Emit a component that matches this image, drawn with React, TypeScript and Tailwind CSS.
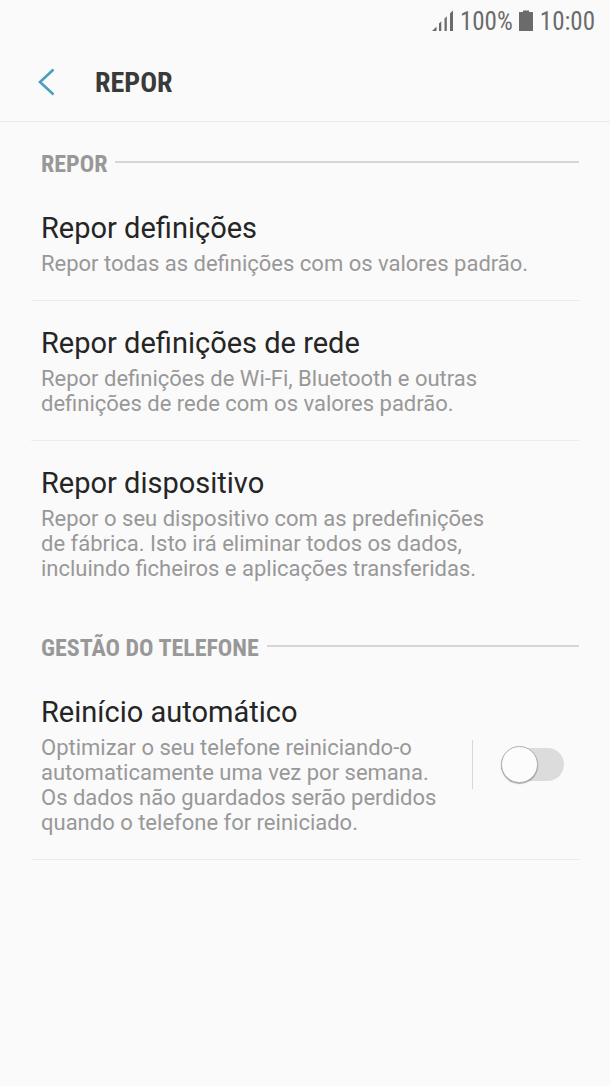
import type { ReactNode } from "react";

function StatusBar() {
  return (
    <div className="flex h-[42px] items-center justify-end pr-[15px] font-['Roboto_Condensed',Roboto,sans-serif] text-[25px] leading-none text-[#6b6b6b]">
      <svg className="mr-[6px]" width="22" height="22" viewBox="0 0 22 22" fill="#6b6b6b" aria-hidden="true">
        <path d="M0 21l4.500-4.500V21zM7 13.500l2.300-2.300V21H7zM12.500 8.500l2.300-2.300V21h-2.300zM18 3.200L21 .5V21h-3z" />
      </svg>
      <span>100%</span>
      <svg className="mr-[7px] ml-[6px]" width="14" height="22" viewBox="0 0 14 22" fill="#6b6b6b" aria-hidden="true">
        <path d="M4 .5h6V2h3.500q.5 0 .5.5v18q0 .5-.5.5H.5q-.5 0-.5-.5v-18Q0 2 .5 2H4z" />
      </svg>
      <span>10:00</span>
    </div>
  );
}

function SectionHeading({ children }: { children: ReactNode }) {
  return (
    <div className="flex items-center gap-2 pt-[26px] pr-[31px] pb-[6px] pl-[41px]">
      <h2 className="font-['Roboto_Condensed',Roboto,sans-serif] text-[24px] leading-8 font-bold text-[#989898]">
        {children}
      </h2>
      <div className="mb-1 h-0.5 flex-1 bg-[#d6d6d6]" />
    </div>
  );
}

const rowClass = "mr-[31px] ml-[31px] border-b pt-[23px] pr-2 pb-6 pl-[10px]";
const titleClass = "block text-[29px] leading-[38px] text-[#252525]";
const textClass = "mt-1 block text-[22px] leading-[25px] whitespace-pre-line text-[#989898]";

function Item({ title, text, last = false }: { title: string; text: string; last?: boolean }) {
  return (
    <li className={`${rowClass} ${last ? "border-transparent" : "border-[#ececec]"}`}>
      <a href="#" className="block">
        <span className={titleClass}>{title}</span>
        <span className={textClass}>{text}</span>
      </a>
    </li>
  );
}

function SwitchItem({ id, title, text }: { id: string; title: string; text: string }) {
  return (
    <li className={`${rowClass} flex items-center border-[#ececec]`}>
      <label htmlFor={id} className="flex-1">
        <span className={titleClass}>{title}</span>
        <span id={`${id}-text`} className={textClass}>{text}</span>
      </label>
      <div className="flex h-[49px] items-center border-l border-[#d8d8d8] pr-[7px] pl-7">
        <input
          id={id}
          type="checkbox"
          role="switch"
          aria-describedby={`${id}-text`}
          className="flex h-[33px] w-[63px] appearance-none items-center rounded-full bg-[#dcdcdc] before:block before:size-[37px] before:shrink-0 before:rounded-full before:border before:border-[#b0b0b0] before:bg-[#fcfcfc] before:shadow-[0_1px_1px_#00000050] before:transition-transform checked:bg-[#9dcbdc] checked:before:translate-x-[26px]"
        />
      </div>
    </li>
  );
}

export default function App() {
  return (
    <div className="min-h-screen bg-[#fafafa] font-[Roboto,sans-serif]">
      <StatusBar />
      <header className="flex h-20 items-center border-b border-[#ececec] pl-[36px]">
        <button type="button" aria-label="Voltar">
          <svg width="20" height="28" viewBox="0 0 20 28" fill="none" stroke="#4a9fbd" strokeWidth="2.6" aria-hidden="true">
            <path d="M17.500 1.500L4 14l13.500 12.500" />
          </svg>
        </button>
        <h1 className="ml-[39px] pt-[2px] font-['Roboto_Condensed',Roboto,sans-serif] text-[28px] font-bold text-[#3a3a3a]">
          REPOR
        </h1>
      </header>
      <main>
        <SectionHeading>REPOR</SectionHeading>
        <ul>
          <Item title="Repor definições" text="Repor todas as definições com os valores padrão." />
          <Item
            title="Repor definições de rede"
            text={"Repor definições de Wi-Fi, Bluetooth e outras\ndefinições de rede com os valores padrão."}
          />
          <Item
            title="Repor dispositivo"
            text={"Repor o seu dispositivo com as predefinições\nde fábrica. Isto irá eliminar todos os dados,\nincluindo ficheiros e aplicações transferidas."}
            last
          />
        </ul>
        <SectionHeading>GESTÃO DO TELEFONE</SectionHeading>
        <ul>
          <SwitchItem
            id="auto-restart"
            title="Reinício automático"
            text={"Optimizar o seu telefone reiniciando-o\nautomaticamente uma vez por semana.\nOs dados não guardados serão perdidos\nquando o telefone for reiniciado."}
          />
        </ul>
      </main>
    </div>
  );
}
